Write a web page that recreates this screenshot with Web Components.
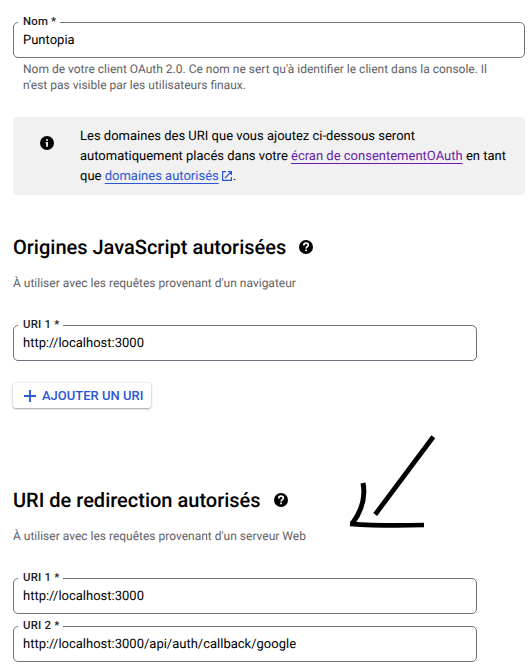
<!DOCTYPE html>
<html lang="fr">
<head>
<meta charset="utf-8">
<title>Client OAuth</title>
<style>
html,body{margin:0;background:#fff}
body{font-family:Roboto,"Liberation Sans",sans-serif;color:#000;height:671px;overflow:hidden;text-rendering:geometricPrecision}
</style>
</head>
<body>
<oauth-form></oauth-form>
<script>
const define = (name, html) => {
  const t = document.createElement('template');
  t.innerHTML = html;
  customElements.define(name, class extends HTMLElement {
    constructor() {
      super();
      this.attachShadow({mode: 'open'}).appendChild(t.content.cloneNode(true));
    }
  });
};

define('text-field', `
<style>
:host{display:block;box-sizing:border-box;height:36px;border:1px solid #6b727c;border-radius:5px;padding-left:9px;position:relative}
.label{position:absolute;left:4px;top:-10px;padding:0 4px 0 5px;background:#fff;font:500 11.4px/16px Roboto,sans-serif;letter-spacing:.2px;color:#202124;white-space:nowrap}
.value{font-size:13px;line-height:36px;white-space:nowrap}
</style>
<div class="label"><slot name="label"></slot></div><div class="value"><slot></slot></div>`);

define('hint-text', `
<style>:host{display:block;font-size:12px;line-height:16px;color:#5f6164;white-space:nowrap}</style><slot></slot>`);

define('info-icon', `
<style>:host{display:block;width:14px;height:14px}svg{display:block}</style>
<svg width="14" height="14" viewBox="0 0 14 14"><circle cx="7" cy="7" r="7"/><path d="M6.2 3.3h1.7v1.6H6.2zM5.6 6.1h2.3v4.7H6.2V7.2H5.6z" fill="#fff"/></svg>`);

define('help-icon', `
<style>:host{display:block;width:14px;height:14px}svg{display:block}</style>
<svg width="14" height="14" viewBox="0 0 14 14"><circle cx="7" cy="7" r="7"/><path d="M4.8 5.4C4.8 4 5.7 3.2 7 3.2S9.3 4 9.3 5.2C9.3 6.7 7.1 6.7 7.1 8.6" fill="none" stroke="#fff" stroke-width="1.7"/><path d="M6.2 9.5h1.7V11.2H6.2z" fill="#fff"/></svg>`);

define('external-icon', `
<style>:host{display:inline-block;width:10px;height:10px;margin:0 1px 0 3px;vertical-align:-1px}svg{display:block}</style>
<svg width="10" height="10" viewBox="0 0 10 10" fill="none" stroke="#2b56d6" stroke-width="1.2"><path d="M4 .6H.6v8.8h8.8V6M6 .6h3.4V4M9.2.8 3 7"/></svg>`);

define('text-link', `
<style>:host{color:#2b56d6;text-decoration:underline 1px;text-underline-offset:3px;text-decoration-skip-ink:none}:host([visited]){color:#681da8}</style><slot></slot>`);

define('info-callout', `
<style>
:host{display:flex;box-sizing:border-box;height:78px;background:#f1f1f1;border-radius:4px;padding:9px 0 0 27px}
info-icon{margin-top:10px;margin-right:26px;flex:none}
.text{font-size:13px;line-height:20px;white-space:nowrap;padding-top:1px}
</style>
<info-icon></info-icon><div class="text"><slot></slot></div>`);

define('section-title', `
<style>:host{display:flex;align-items:center;height:28px;gap:13px}
h2{margin:0;font:500 20px/28px Roboto,sans-serif;white-space:nowrap}</style>
<h2><slot></slot></h2><help-icon></help-icon>`);

define('add-button', `
<style>
:host{display:block}
button{display:flex;align-items:center;box-sizing:border-box;width:138px;height:25px;border:0;border-radius:3px;padding:0 0 0 11px;gap:6px;background:#fff;color:#2b56d6;box-shadow:0 1px 2px rgba(0,0,0,.32),0 0 3px rgba(0,0,0,.13);font:500 13px/25px Roboto,sans-serif;white-space:nowrap}
svg{flex:none}
</style>
<button><svg width="12" height="12" viewBox="0 0 12 12"><path d="M6 0v12M0 6h12" stroke="#2b56d6" stroke-width="1.8"/></svg><span><slot></slot></span></button>`);

define('hand-arrow', `
<style>:host{position:absolute;left:330px;top:420px;pointer-events:none}svg{display:block}</style>
<svg width="120" height="120" viewBox="0 0 120 120" fill="none" stroke="#000"><path d="M103.3 16.8 45.2 94.5" stroke-width="4.8"/><path d="M33 63Q37 84 22 104" stroke-width="5"/><path d="M20 103.8Q52 106.3 94 105" stroke-width="4.7"/></svg>`);

define('oauth-form', `
<style>
:host{display:block;position:relative;box-sizing:border-box;height:671px;padding:22px 7px 0 13px}
.name-hint{margin:3px 0 0 10px}
info-callout{margin-top:24px}
section-title{margin-top:38px}
.sub{margin-top:14px}
.uri{width:464px}
.first{margin-top:34px}
.next{margin-top:12px}
add-button{margin-top:22px}
.redirect{margin-top:78px}
</style>
<text-field><span slot="label">Nom *</span>Puntopia</text-field>
<hint-text class="name-hint">Nom de votre client OAuth 2.0. Ce nom ne sert qu'à identifier le client dans la console. Il<br>n'est pas visible par les utilisateurs finaux.</hint-text>
<info-callout>Les domaines des URI que vous ajoutez ci-dessous seront<br>automatiquement placés dans votre <text-link visited>écran de consentementOAuth</text-link> en tant<br>que <text-link>domaines autorisés</text-link><external-icon></external-icon>.</info-callout>
<section-title>Origines JavaScript autorisées</section-title>
<hint-text class="sub">À utiliser avec les requêtes provenant d'un navigateur</hint-text>
<text-field class="uri first"><span slot="label">URI 1 *</span>http://localhost:3000</text-field>
<add-button>AJOUTER UN URI</add-button>
<section-title class="redirect">URI de redirection autorisés</section-title>
<hint-text class="sub">À utiliser avec les requêtes provenant d'un serveur Web</hint-text>
<text-field class="uri first"><span slot="label">URI 1 *</span>http://localhost:3000</text-field>
<text-field class="uri next"><span slot="label">URI 2 *</span>http://localhost:3000/api/auth/callback/google</text-field>
<hand-arrow></hand-arrow>`);
</script>
</body>
</html>
